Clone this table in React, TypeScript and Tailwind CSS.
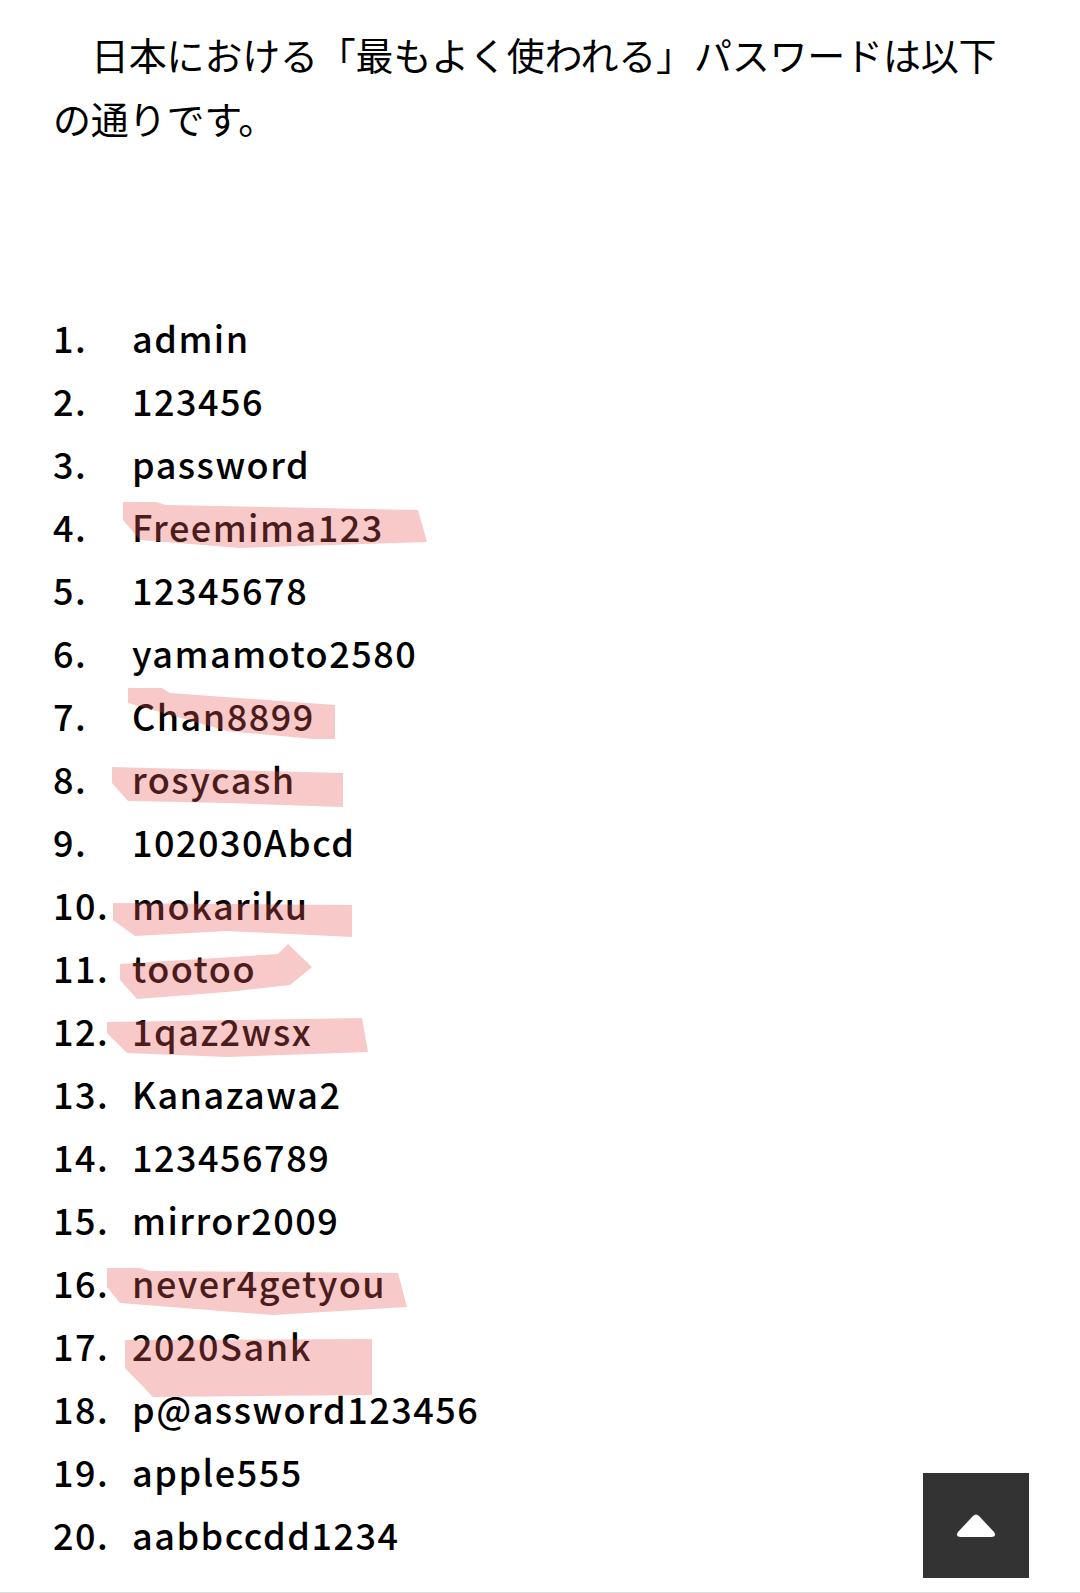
const passwords = [
  'admin',
  '123456',
  'password',
  'Freemima123',
  '12345678',
  'yamamoto2580',
  'Chan8899',
  'rosycash',
  '102030Abcd',
  'mokariku',
  'tootoo',
  '1qaz2wsx',
  'Kanazawa2',
  '123456789',
  'mirror2009',
  'never4getyou',
  '2020Sank',
  'p@assword123456',
  'apple555',
  'aabbccdd1234',
];

// marker strokes drawn over the list, in page coordinates
const marks = [
  '123,502 157,502 165,505 418,510 427,542 240,548 140,540 123,520',
  '128,688 162,688 170,693 335,705 335,739 313,739 227,731 128,703',
  '112,767 343,773 343,807 227,803 128,801 112,783',
  '113,903 352,905 352,937 227,931 135,936 113,920',
  '120,964 278,954 288,944 312,967 290,985 227,992 137,999 120,980',
  '107,1022 362,1018 368,1052 227,1057 127,1053 107,1033',
  '107,1268 140,1268 150,1271 398,1273 407,1307 273,1315 120,1303 107,1287',
  '125,1340 372,1339 372,1395 153,1397 125,1368',
];

export default function App() {
  return (
    <div
      className="relative w-[1080px] h-[1593px] bg-white text-black overflow-hidden"
      style={{ fontFamily: '"Noto Sans CJK JP", "Noto Sans", sans-serif' }}
    >
      <div className="px-[53px] pt-[22px]">
        <p className="text-[38px] leading-[64px] indent-[1em] tracking-[-0.2px]">
          日本における「最もよく使われる」パスワードは以下の通りです。
        </p>

        <ol className="mt-[156px]">
          {passwords.map((pw, i) => (
            <li key={pw} className="flex text-[36px] leading-[63px] font-medium tracking-[1.5px]">
              <span className="w-[79px] shrink-0">{i + 1}.</span>
              <span>{pw}</span>
            </li>
          ))}
        </ol>
      </div>

      <svg className="absolute inset-0 pointer-events-none" width="1080" height="1593">
        {marks.map((pts) => (
          <polygon key={pts} points={pts} fill="rgb(233,88,88)" fillOpacity="0.32" />
        ))}
      </svg>

      <button className="absolute left-[923px] top-[1473px] w-[106px] h-[105px] bg-[#333333] flex items-center justify-center">
        <svg width="42" height="26" viewBox="0 0 42 26">
          <path
            d="M18 3 Q21 0 24 3 L39 19 Q42 24 36 24 L6 24 Q0 24 3 19 Z"
            fill="white"
          />
        </svg>
      </button>

      <div className="absolute left-0 right-0 bottom-0 h-px bg-[#dddddd]" />
    </div>
  );
}
